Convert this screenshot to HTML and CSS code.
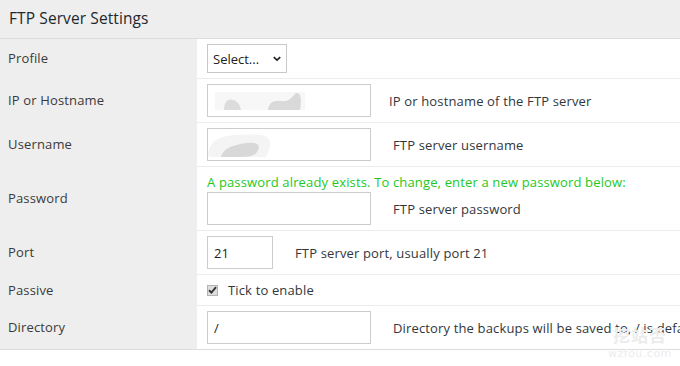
FILE: index.html
```html
<!DOCTYPE html>
<html>
<head>
<meta charset="utf-8">
<link rel="stylesheet" href="styles.css">
</head>
<body>
<div class="panel">
  <div class="panel-head">FTP Server Settings</div>
  <div class="rows">
    <div class="row">
      <div class="label">Profile</div>
      <div class="value">
        <span class="select-wrap">
          <select class="select"><option>Select...</option></select>
          <svg class="chev" width="10" height="8" viewBox="0 0 10 8"><path d="M1.8 2.2 L5 5.2 L8.2 2.2" fill="none" stroke="#222" stroke-width="1.7"/></svg>
        </span>
      </div>
    </div>
    <div class="row">
      <div class="label">IP or Hostname</div>
      <div class="value">
        <span class="field">
          <input class="input" type="text">
          <svg class="blur" width="96" height="22" viewBox="0 0 96 22"><rect x="4" y="2" width="90" height="18" fill="#f7f7f7"/><path d="M13 20 C13 12 17 8 22 10 C27 11 29 15 30 20 Z" fill="#dcdcdc"/><path d="M57 20 C58 13 62 10 70 11 C78 12 80 8 85 3 C90 2 91 10 89 20 Z" fill="#d9d9d9"/></svg>
        </span>
        <span class="help help-ip">IP or hostname of the FTP server</span>
      </div>
    </div>
    <div class="row">
      <div class="label">Username</div>
      <div class="value">
        <span class="field">
          <input class="input" type="text">
          <svg class="blur blur-user" width="66" height="26" viewBox="0 0 66 26"><path d="M1 22 C3 10 10 4 30 3 C48 2 62 2 63 10 C64 16 60 24 58 25 L2 25 Z" fill="#f4f4f4"/><path d="M14 25 C16 17 24 13 40 11 C52 10 54 14 50 20 C47 25 40 25 30 25 Z" fill="#d8d8d8"/></svg>
        </span>
        <span class="help">FTP server username</span>
      </div>
    </div>
    <div class="row">
      <div class="label">Password</div>
      <div class="value value-stack">
        <div class="notice">A password already exists. To change, enter a new password below:</div>
        <div class="line">
          <input class="input" type="password">
          <span class="help">FTP server password</span>
        </div>
      </div>
    </div>
    <div class="row">
      <div class="label">Port</div>
      <div class="value">
        <input class="input input-port" type="text" value="21">
        <span class="help">FTP server port, usually port 21</span>
      </div>
    </div>
    <div class="row row-check">
      <div class="label">Passive</div>
      <div class="value">
        <span class="check"><svg width="9" height="8" viewBox="0 0 9 8"><path d="M1 4.2 L3.4 6.5 L8 1.2" fill="none" stroke="#333" stroke-width="1.9"/></svg></span>
        <span class="tick">Tick to enable</span>
      </div>
    </div>
    <div class="row">
      <div class="label">Directory</div>
      <div class="value">
        <input class="input" type="text" value="/">
        <span class="help">Directory the backups will be saved to, / is default</span>
      </div>
    </div>
  </div>
</div>
<div class="watermark"><span class="wm-cn">挖站否</span><span class="wm-en">wzfou.com</span></div>
</body>
</html>
```
FILE: styles.css
```css
html, body {
  margin: 0;
  padding: 0;
  background: #fff;
  width: 680px;
  height: 366px;
  overflow: hidden;
  font-family: "Open Sans", "Noto Sans", sans-serif;
  font-size: 13px;
  letter-spacing: 0.15px;
  color: #32373c;
}
.panel {
  width: 680px;
  border-bottom: 1px solid #dcdcdc;
}
.panel-head {
  height: 38px;
  line-height: 37px;
  padding-left: 9px;
  background: #eeeeee;
  border-bottom: 1px solid #dcdcdc;
  font-size: 15.5px;
  letter-spacing: 0.1px;
  color: #23282d;
}
.row {
  display: flex;
}
.label {
  width: 189px;
  flex: none;
  padding: 0 0 2px 8px;
  background: #eeeeee;
  display: flex;
  align-items: center;
  color: #3a3a3a;
}
.value {
  flex: 1;
  display: flex;
  align-items: center;
  padding: 5px 0 5px 10px;
  border-bottom: 1px solid #ececec;
  white-space: nowrap;
  min-width: 0;
  overflow: hidden;
}
.row:last-child .value {
  border-bottom: none;
}
.value-stack {
  flex-direction: column;
  align-items: flex-start;
  padding-top: 6px;
}
.line {
  display: flex;
  align-items: center;
}
.notice {
  color: #1ec81e;
  line-height: 19px;
}
.select-wrap {
  position: relative;
  display: inline-block;
  line-height: 0;
}
.select {
  -webkit-appearance: none;
  appearance: none;
  width: 80px;
  height: 29px;
  margin: 0;
  padding: 0 0 0 5px;
  border: 1px solid #c8c8c8;
  border-radius: 0;
  background: #fff;
  font-family: inherit;
  font-size: 13px;
  color: #222;
}
.chev {
  position: absolute;
  right: 5px;
  top: 11px;
  pointer-events: none;
}
.field {
  position: relative;
  display: inline-block;
  line-height: 0;
}
.input {
  width: 164px;
  height: 33px;
  box-sizing: border-box;
  margin: 0;
  padding: 0 6px;
  border: 1px solid #cccccc;
  border-radius: 0;
  background: #fff;
  font-family: inherit;
  font-size: 13px;
  color: #222;
  outline: none;
}
.input-port {
  width: 66px;
}
.blur {
  position: absolute;
  left: 4px;
  top: 6px;
}
.blur-user {
  left: 0;
  top: 4px;
}
.help {
  margin-left: 22px;
  color: #32373c;
}
.help-ip {
  margin-left: 18px;
}
.row-check .value {
  height: 20px;
}
.check {
  width: 11px;
  height: 11px;
  flex: none;
  box-sizing: border-box;
  border: 1px solid #b4b4b4;
  background: #dedede;
  display: inline-flex;
  align-items: center;
  justify-content: center;
}
.tick {
  margin-left: 10px;
}
.watermark {
  position: absolute;
  left: 608px;
  top: 326px;
  display: flex;
  flex-direction: column;
  align-items: center;
  color: #ececec;
  line-height: 1;
  letter-spacing: 0;
}
.wm-cn {
  font-family: "Noto Sans CJK SC", sans-serif;
  font-weight: bold;
  font-size: 17px;
  letter-spacing: 1px;
}
.wm-en {
  font-family: "DejaVu Sans", sans-serif;
  font-size: 11px;
  margin-top: 5px;
  letter-spacing: 0.5px;
}
```
